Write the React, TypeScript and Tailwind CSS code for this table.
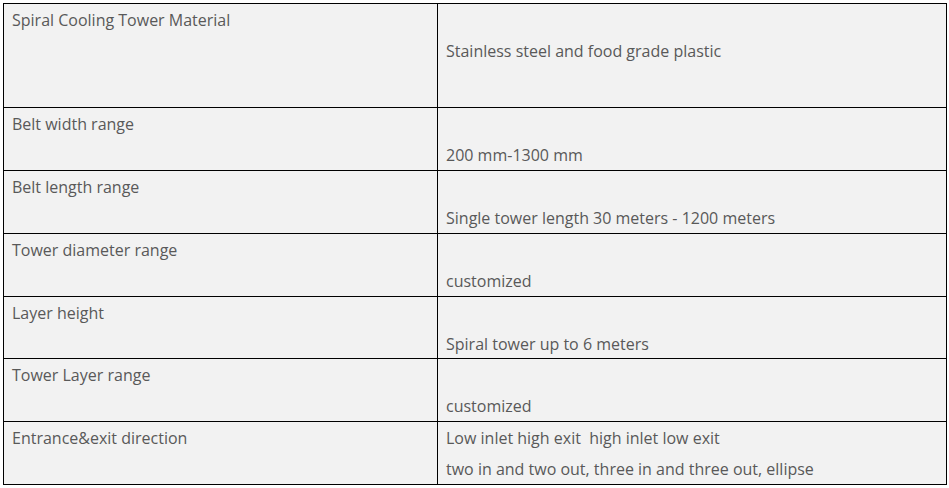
import React from 'react'

const rows: { label: string; value: string[]; h: string }[] = [
  { label: 'Spiral Cooling Tower Material', value: ['', 'Stainless steel and food grade plastic'], h: 'h-[103px]' },
  { label: 'Belt width range', value: ['', '200 mm-1300 mm'], h: 'h-[63px]' },
  { label: 'Belt length range', value: ['', 'Single tower length 30 meters - 1200 meters'], h: 'h-[63px]' },
  { label: 'Tower diameter range', value: ['', 'customized'], h: 'h-[63px]' },
  { label: 'Layer height', value: ['', 'Spiral tower up to 6 meters'], h: 'h-[62px]' },
  { label: 'Tower Layer range', value: ['', 'customized'], h: 'h-[63px]' },
  {
    label: 'Entrance&exit direction',
    value: ['Low inlet high exit\u00a0 high inlet low exit', 'two in and two out, three in and three out, ellipse'],
    h: 'h-[63px]',
  },
]

export default function App() {
  return (
    <div className="w-[949px] h-[488px] bg-white pt-[3px] pl-[3px]" style={{ fontFamily: '"Open Sans", sans-serif' }}>
      <div className="w-[944px] border border-black bg-[#f2f2f2] text-[16px] leading-[31px] text-[#595959]">
        {rows.map((r, i) => (
          <div key={r.label} className={`flex ${r.h} ${i > 0 ? 'border-t border-black' : ''}`}>
            <div className="w-[434px] border-r border-black pl-2 pt-px">{r.label}</div>
            <div className="flex-1 pl-2 pt-px">
              {r.value.map((v, j) => (
                <div key={j} className="h-[31px] whitespace-pre">
                  {v}
                </div>
              ))}
            </div>
          </div>
        ))}
      </div>
    </div>
  )
}
